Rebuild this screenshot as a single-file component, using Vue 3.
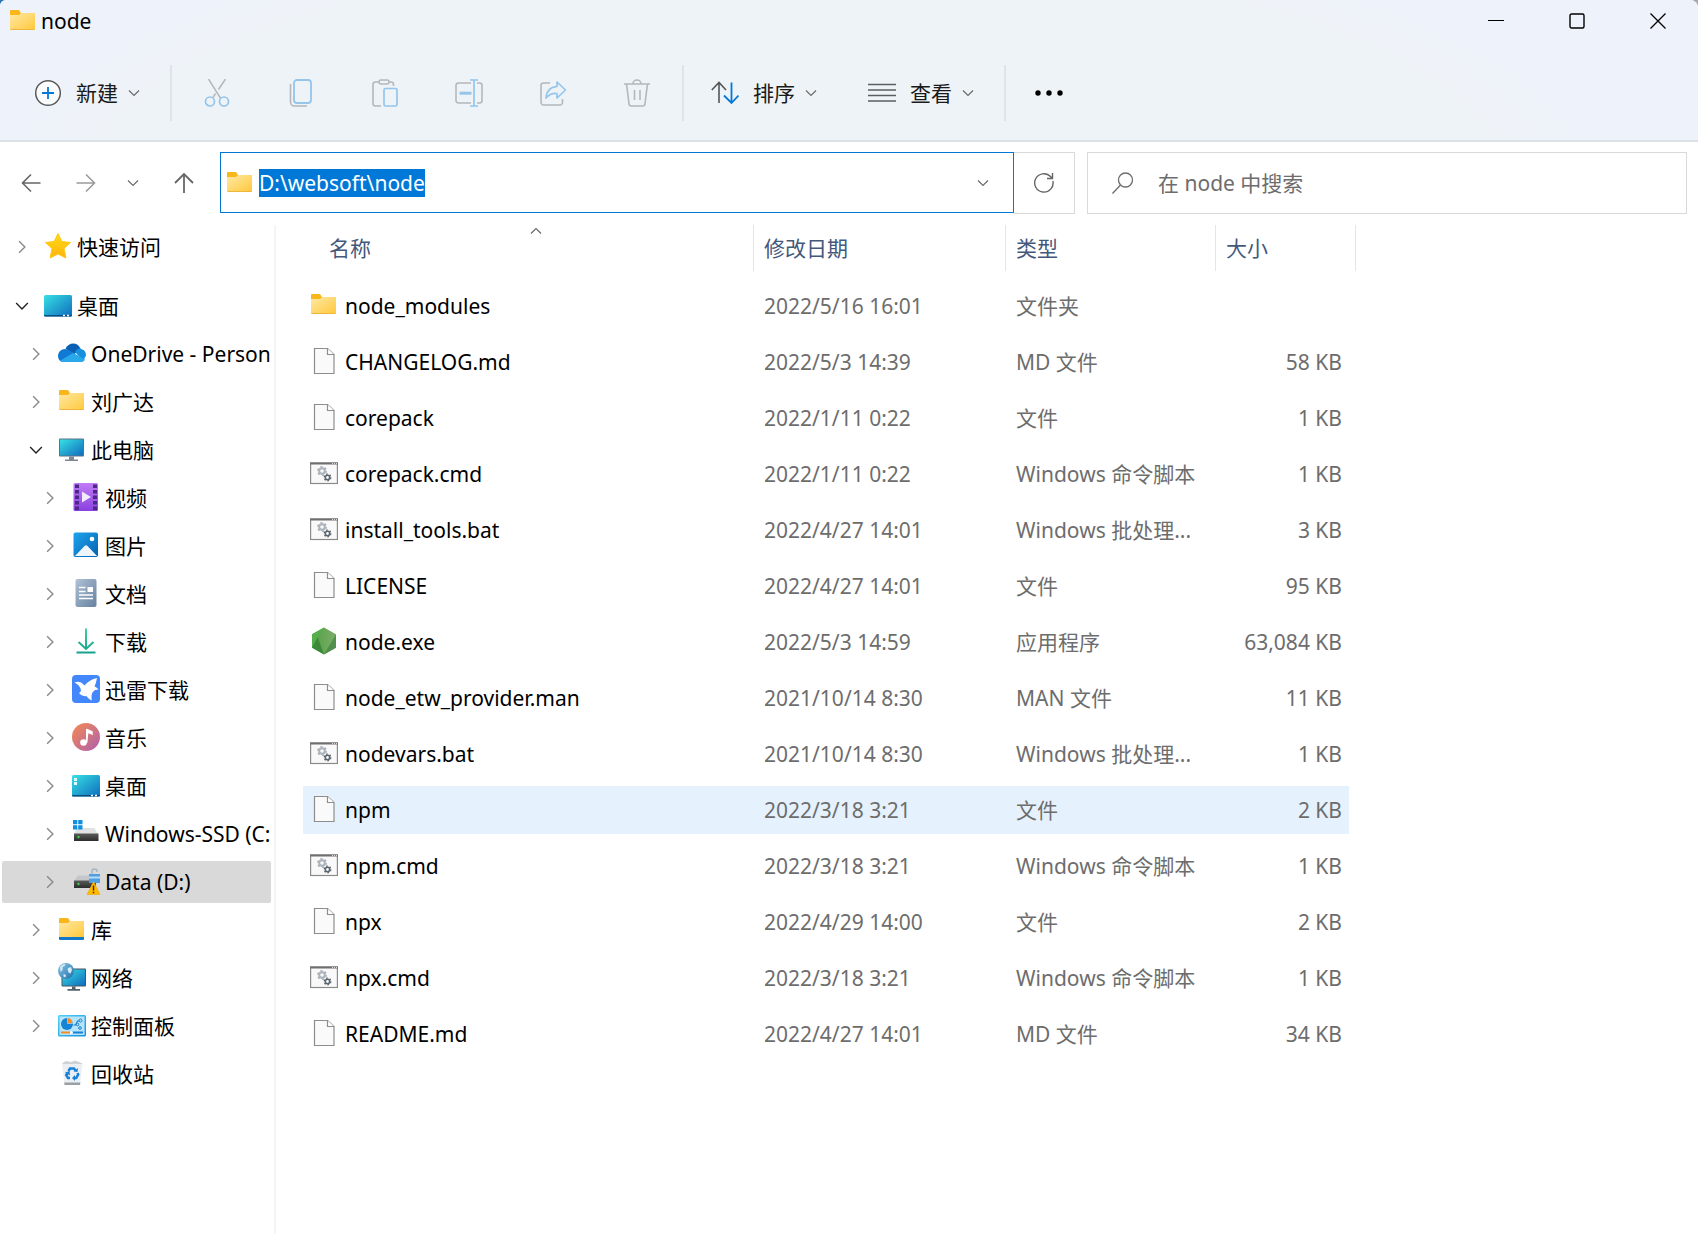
<script setup>
import { onMounted, ref } from 'vue'

const address = ref('D:\\websoft\\node')
const query = ref('')
const addressInput = ref(null)

const editActions = [
  { icon: 'cut', label: '剪切' },
  { icon: 'copy', label: '复制' },
  { icon: 'paste', label: '粘贴' },
  { icon: 'rename', label: '重命名' },
  { icon: 'share', label: '共享' },
  { icon: 'trash', label: '删除' },
]

const tree = [
  { name: '快速访问', icon: 'star', level: 0, group: true },
  { name: '桌面', icon: 'desktop', level: 0, open: true },
  { name: 'OneDrive - Personal', icon: 'cloud', level: 1 },
  { name: '刘广达', icon: 'folder', level: 1 },
  { name: '此电脑', icon: 'pc', level: 1, open: true },
  { name: '视频', icon: 'video', level: 2 },
  { name: '图片', icon: 'picture', level: 2 },
  { name: '文档', icon: 'document', level: 2 },
  { name: '下载', icon: 'download', level: 2 },
  { name: '迅雷下载', icon: 'thunder', level: 2 },
  { name: '音乐', icon: 'music', level: 2 },
  { name: '桌面', icon: 'desktop-tiles', level: 2 },
  { name: 'Windows-SSD (C:)', icon: 'drive-win', level: 2 },
  { name: 'Data (D:)', icon: 'drive-lock', level: 2, selected: true },
  { name: '库', icon: 'library', level: 1 },
  { name: '网络', icon: 'network', level: 1 },
  { name: '控制面板', icon: 'control', level: 1 },
  { name: '回收站', icon: 'recycle', level: 1, leaf: true },
]

const files = [
  { name: 'node_modules', icon: 'folder', date: '2022/5/16 16:01', type: '文件夹', size: '' },
  { name: 'CHANGELOG.md', icon: 'file', date: '2022/5/3 14:39', type: 'MD 文件', size: '58 KB' },
  { name: 'corepack', icon: 'file', date: '2022/1/11 0:22', type: '文件', size: '1 KB' },
  { name: 'corepack.cmd', icon: 'script', date: '2022/1/11 0:22', type: 'Windows 命令脚本', size: '1 KB' },
  { name: 'install_tools.bat', icon: 'script', date: '2022/4/27 14:01', type: 'Windows 批处理...', size: '3 KB' },
  { name: 'LICENSE', icon: 'file', date: '2022/4/27 14:01', type: '文件', size: '95 KB' },
  { name: 'node.exe', icon: 'node', date: '2022/5/3 14:59', type: '应用程序', size: '63,084 KB' },
  { name: 'node_etw_provider.man', icon: 'file', date: '2021/10/14 8:30', type: 'MAN 文件', size: '11 KB' },
  { name: 'nodevars.bat', icon: 'script', date: '2021/10/14 8:30', type: 'Windows 批处理...', size: '1 KB' },
  { name: 'npm', icon: 'file', date: '2022/3/18 3:21', type: '文件', size: '2 KB', hover: true },
  { name: 'npm.cmd', icon: 'script', date: '2022/3/18 3:21', type: 'Windows 命令脚本', size: '1 KB' },
  { name: 'npx', icon: 'file', date: '2022/4/29 14:00', type: '文件', size: '2 KB' },
  { name: 'npx.cmd', icon: 'script', date: '2022/3/18 3:21', type: 'Windows 命令脚本', size: '1 KB' },
  { name: 'README.md', icon: 'file', date: '2022/4/27 14:01', type: 'MD 文件', size: '34 KB' },
]

onMounted(() => {
  addressInput.value.focus()
  addressInput.value.select()
})
</script>

<template>
  <svg class="sprite" aria-hidden="true">
    <defs>
      <linearGradient id="g-folder" x1="0" y1="0" x2="1" y2="1"><stop offset="0" stop-color="#ffe9a6" /><stop offset="1" stop-color="#ffc83a" /></linearGradient>
      <linearGradient id="g-screen" x1="0" y1="0" x2="1" y2="1"><stop offset="0" stop-color="#37e0e4" /><stop offset="1" stop-color="#0f6cbd" /></linearGradient>
      <linearGradient id="g-star" x1="0" y1="0" x2="0" y2="1"><stop offset="0" stop-color="#ffdc14" /><stop offset="1" stop-color="#ffb30f" /></linearGradient>
      <linearGradient id="g-video" x1="0" y1="0" x2="0" y2="1"><stop offset="0" stop-color="#c07cf7" /><stop offset="1" stop-color="#8a40e0" /></linearGradient>
      <linearGradient id="g-pic" x1="0" y1="0" x2="1" y2="1"><stop offset="0" stop-color="#1fa5ee" /><stop offset="1" stop-color="#0560b0" /></linearGradient>
      <linearGradient id="g-doc" x1="0" y1="0" x2="1" y2="1"><stop offset="0" stop-color="#b0c2d6" /><stop offset="1" stop-color="#66809f" /></linearGradient>
      <linearGradient id="g-down" gradientUnits="userSpaceOnUse" x1="14" y1="2" x2="14" y2="27"><stop offset="0" stop-color="#3fcf96" /><stop offset="1" stop-color="#12a08c" /></linearGradient>
      <linearGradient id="g-music" x1="0" y1="0" x2="1" y2="1"><stop offset="0" stop-color="#f58b52" /><stop offset="1" stop-color="#ae5fae" /></linearGradient>
      <linearGradient id="g-drive" x1="0" y1="0" x2="0" y2="1"><stop offset="0" stop-color="#5a5a5a" /><stop offset="1" stop-color="#2c2c2c" /></linearGradient>
      <linearGradient id="g-node" x1="0" y1="0" x2="1" y2="0"><stop offset="0" stop-color="#4f9e45" /><stop offset="1" stop-color="#7fae6a" /></linearGradient>
      <linearGradient id="g-globe" x1="0" y1="0" x2="1" y2="1"><stop offset="0" stop-color="#8cc8ea" /><stop offset="1" stop-color="#1f6ea6" /></linearGradient>
      <linearGradient id="g-panel" x1="0" y1="0" x2="1" y2="1"><stop offset="0" stop-color="#4fd2f7" /><stop offset="1" stop-color="#1a90dc" /></linearGradient>
    </defs>

    <symbol id="i-folder" viewBox="0 0 28 28">
      <path d="M2 3h8l2 3h14v3H1V4a1 1 0 0 1 1-1z" fill="#f9b71c" />
      <path d="M1 8h9l2-2h13a1 1 0 0 1 1 1v15a1 1 0 0 1-1 1H2a1 1 0 0 1-1-1z" fill="url(#g-folder)" />
      <path d="M1.500 22.500h24" stroke="#efb63c" stroke-width="1" />
    </symbol>
    <symbol id="i-library" viewBox="0 0 28 28">
      <path d="M2 3h8l2 3h14v3H1V4a1 1 0 0 1 1-1z" fill="#f9b71c" />
      <path d="M1 8h9l2-2h13a1 1 0 0 1 1 1v15H1z" fill="url(#g-folder)" />
      <path d="M1 22h25v2a1 1 0 0 1-1 1H2a1 1 0 0 1-1-1z" fill="#0f78c8" />
    </symbol>
    <symbol id="i-star" viewBox="0 0 28 28">
      <path d="M14 1.500l3.800 8 8.700 1-6.500 6 1.900 9.500-7.900-4-7.900 4L8 16.500l-6.500-6 8.700-1z" fill="url(#g-star)" stroke="#ffc60f" stroke-linejoin="round" />
    </symbol>
    <symbol id="i-desktop" viewBox="0 0 28 28">
      <rect y="4" width="28" height="21.500" rx="1.500" fill="url(#g-screen)" />
      <path d="M0 24h28v.5a1 1 0 0 1-1 1H1a1 1 0 0 1-1-1z" fill="#0b4f80" />
      <path d="M19 24.500h2m2 0h2" stroke="#fff" stroke-width="1.500" />
    </symbol>
    <symbol id="i-desktop-tiles" viewBox="0 0 28 28">
      <use href="#i-desktop" width="28" height="28" />
      <path d="M2 7h3v3H2zm0 4h3v3H2z" fill="#e4fbff" />
    </symbol>
    <symbol id="i-cloud" viewBox="0 0 28 28">
      <path d="M7.500 10C10 3 20 2.500 22.500 10l-6 5z" fill="#0a5fb4" />
      <path d="M0 17c0-5 5-8.500 9.500-6.500L20 17 4 23c-2.500-.8-4-3.500-4-6z" fill="#1079d4" />
      <path d="M17 13c2-4.500 6-4 7-2.500 3 .5 4 3.500 4 6L25 22z" fill="#1490df" />
      <path d="M2.500 21.500L15 14l12 6.500c-1 2-2.500 2.500-4 2.500H7c-2 0-3.500-.5-4.500-1.500z" fill="#29a8ea" />
    </symbol>
    <symbol id="i-pc" viewBox="0 0 28 28">
      <rect x="1" y="3.500" width="25" height="18" rx="1" fill="#5b7286" />
      <rect x="2" y="4.500" width="23" height="16" fill="url(#g-screen)" />
      <path d="M11 21.500h5v3h4V26H7v-1.500h4z" fill="#7b8792" />
    </symbol>
    <symbol id="i-video" viewBox="0 0 28 28">
      <rect x="1.500" width="24.500" height="28" rx="1.500" fill="url(#g-video)" />
      <path d="M3 1.500h4V5H3zm0 5.500h4v3.500H3zm0 5.500h4V16H3zM3 18h4v3.500H3zm0 5.500h4V27H3zm18-22h4V5h-4zM21 7h4v3.500h-4zm0 5.500h4V16h-4zm0 5.500h4v3.500h-4zm0 5.500h4V27h-4z" fill="#4d2787" />
      <path d="M10 8.500l9 5.500-9 5.500z" fill="#f3eafd" />
    </symbol>
    <symbol id="i-picture" viewBox="0 0 28 28">
      <rect x="1.500" y="1.500" width="24.500" height="24.500" rx="2" fill="url(#g-pic)" />
      <path d="M3 25l9.500-10a2 2 0 0 1 3 0L25 25z" fill="#eef6fc" />
      <circle cx="20" cy="8" r="2.300" fill="#fff" />
    </symbol>
    <symbol id="i-document" viewBox="0 0 28 28">
      <rect x="3.500" y="0" width="21" height="28" rx="2" fill="url(#g-doc)" />
      <path d="M7 8.500h6.500m-6.500 4h6.500M7 16h14M7 19.500h14" stroke="#fff" stroke-width="1.500" />
      <path d="M15.500 8h5.500v5h-5.500z" fill="#fff" />
    </symbol>
    <symbol id="i-download" viewBox="0 0 28 28">
      <path d="M14 1.500v20.500M6.500 15l7.500 7 7.500-7M4.500 25.500h19" fill="none" stroke="url(#g-down)" stroke-width="2" />
    </symbol>
    <symbol id="i-thunder" viewBox="0 0 28 28">
      <rect width="28" height="28" rx="4" fill="#4287fb" />
      <path d="M2.500 7.500c3-1.200 6-.8 8.500 1.500l1.500 1.500C15.500 7 19 4.500 25 3c-.8 3.500-1.300 6-2.500 8.500 1.500.5 3 1.500 4 3-2.500 0-4.500.8-5.700 2.500-1.300 1.800-1.500 4.500-1 8.500-2-.8-3.800-2.200-5-4.200-3 .3-5.800-1-7.800-3.300 2-.8 2.300-2.500 1.500-4.500C7.500 10.800 5.500 9 2.500 7.500z" fill="#fff" />
    </symbol>
    <symbol id="i-music" viewBox="0 0 28 28">
      <circle cx="14" cy="14" r="14" fill="url(#g-music)" />
      <circle cx="11.500" cy="19.500" r="3.300" fill="#fff" />
      <path d="M14.800 19.500V6l5.700 2.500v3.200l-4-1.700" fill="#fff" stroke="#fff" stroke-width=".5" />
      <path d="M14 6h1.500v13.500H14z" fill="#fff" />
    </symbol>
    <symbol id="i-drive-win" viewBox="0 0 28 28">
      <path d="M5 9h17.500L26 15H2z" fill="#dfe1e3" />
      <rect x="2" y="14.500" width="24.500" height="7.500" fill="url(#g-drive)" />
      <circle cx="6.500" cy="18" r="1.200" fill="#3bd24a" />
      <path d="M1 1h4.300v4.300H1zm5.200 0h4.300v4.300H6.200zM1 6.200h4.300v4.300H1zm5.200 0h4.300v4.300H6.200z" fill="#0e8fe0" />
    </symbol>
    <symbol id="i-drive-lock" viewBox="0 0 28 28">
      <path d="M6 8.500h15L25 14H2z" fill="#c4c7ca" />
      <rect x="2" y="13.500" width="22" height="7.500" fill="url(#g-drive)" />
      <circle cx="6.500" cy="17" r="1.200" fill="#3bd24a" />
      <path d="M20 7V4.500a2.500 2.500 0 0 1 5 0V5" fill="none" stroke="#a9b7c2" stroke-width="1.500" />
      <path d="M17 7h11v9H17z" fill="#4ea0e2" /><path d="M17 9.500h11v2H17z" fill="#b5dcf8" />
      <path d="M21.500 14.500L28 27.500H15z" fill="#ffb900" stroke="#f0a800" stroke-width=".6" stroke-linejoin="round" />
      <path d="M21.500 18.500v5m0 1.200v1.500" stroke="#3a2c00" stroke-width="1.400" />
    </symbol>
    <symbol id="i-network" viewBox="0 0 28 28">
      <rect x="3.500" y="5.500" width="24.500" height="18" rx="1" fill="#41566a" />
      <rect x="4.500" y="6.500" width="22.500" height="16" fill="url(#g-screen)" />
      <path d="M14 23.500h3.500v2.500h4.500v1.800H9.500V26H14z" fill="#56606a" />
      <circle cx="8" cy="8" r="8" fill="url(#g-globe)" />
      <path d="M2 4c1.500-2 3.500-3 5.500-3l-1 2-2 1v3L2.500 9zM10 5l3-1 1 3-1.500 3.500-2-1-1-3zM5.500 11l2.500 1-.5 2.500-2-1z" fill="#d3eaf7" />
    </symbol>
    <symbol id="i-control" viewBox="0 0 28 28">
      <rect y="4" width="28" height="21.500" rx="1.500" fill="url(#g-panel)" />
      <rect x="1.500" y="5.500" width="25" height="18.500" fill="#b5e4fb" />
      <circle cx="9" cy="13" r="6" fill="#1583d6" />
      <path d="M9.500 12.500v-6a6 6 0 0 1 5 6z" fill="#f68b1e" stroke="#b5e4fb" stroke-width=".6" />
      <path d="M15.500 14h2l2-4h2" fill="none" stroke="#1a7fc8" stroke-width="1.100" />
      <circle cx="22.500" cy="9.500" r="1.500" fill="none" stroke="#1a7fc8" /><circle cx="19.500" cy="13.500" r="1.300" fill="none" stroke="#1a7fc8" /><circle cx="22" cy="17" r="1.300" fill="none" stroke="#1a7fc8" />
      <path d="M3 21.500h9" stroke="#f68b1e" stroke-width="2" /><path d="M14 21.500h11" stroke="#1583d6" stroke-width="2" />
      <circle cx="13.500" cy="21.500" r="1.500" fill="#fff" />
    </symbol>
    <symbol id="i-recycle" viewBox="0 0 28 28">
      <path d="M4 4.500l4-2.500 5 1 4-1.500 4 1.500 3.500 1.500-1 2H5z" fill="#cfd2d5" />
      <path d="M4 5h20.500L22 26H6.500z" fill="#eceff1" />
      <path d="M6.300 23.500h16L22 26H6.500z" fill="#9aa0a6" />
      <path d="M10.500 12l1.500-2.500h4l1.500 2M19.500 14l.7 1.500-2 3.500h-2m-4.200 0H10l-1.800-3 1.300-2" fill="none" stroke="#1482dc" stroke-width="2.500" />
      <path d="M15.500 12.500l4 .5.500-4zM17 16v6l-3-3zM7 13.500l4.500-1.500.5 4.500z" fill="#1482dc" />
    </symbol>
    <symbol id="i-file" viewBox="0 0 28 28">
      <path d="M4.500 1.500h13l6.500 6v19H4.500z" fill="#fafafa" stroke="#8d8d8d" stroke-width="1.200" />
      <path d="M17.500 1.500v6H24" fill="#fff" stroke="#8d8d8d" stroke-width="1.200" />
    </symbol>
    <symbol id="i-script" viewBox="0 0 28 28">
      <rect x=".6" y="4" width="26.800" height="20.500" fill="#f9f9f9" stroke="#8a8a8a" stroke-width="1.200" />
      <path d="M0 4.500h28" stroke="#6f6f6f" stroke-width="2" />
      <path d="M22 4.500h1m1 0h1m1 0h1" stroke="#ddd" stroke-width="1" />
      <circle cx="12" cy="12" r="2.800" fill="none" stroke="#a9b3bb" stroke-width="2" />
      <circle cx="12" cy="12" r="4.200" fill="none" stroke="#a9b3bb" stroke-width="1.600" stroke-dasharray="2.200 2.200" />
      <circle cx="17.500" cy="18.500" r="2.200" fill="none" stroke="#5b666f" stroke-width="1.600" />
      <circle cx="17.500" cy="18.500" r="3.300" fill="none" stroke="#5b666f" stroke-width="1.300" stroke-dasharray="1.700 1.750" />
    </symbol>
    <symbol id="i-node" viewBox="0 0 28 28">
      <path d="M14 .5l12 6.800v13.400L14 27.500 2 20.700V7.300z" fill="url(#g-node)" />
      <path d="M2 20.500L7.500 10 14 27.500z" fill="#3a8a3a" />
      <path d="M14 .5L7.500 10 2 20.500V7.300z" fill="#56b04a" />
      <path d="M26 7.300v13.400L14 27.500z" fill="#3e8542" opacity=".7" />
    </symbol>

    <symbol id="i-cut" viewBox="0 0 28 28">
      <path d="M5.500 0l12.200 19.500M22.500 0l-7 10.500M12.500 14.500L10 18.500" fill="none" stroke="#b4b8bc" stroke-width="1.500" />
      <circle cx="7" cy="22.500" r="4.500" fill="none" stroke="#95c5ea" stroke-width="1.700" />
      <circle cx="21" cy="22.500" r="4.500" fill="none" stroke="#95c5ea" stroke-width="1.700" />
    </symbol>
    <symbol id="i-copy" viewBox="0 0 28 28">
      <path d="M3.500 5v18a4 4 0 0 0 4 4H20" fill="none" stroke="#b4b8bc" stroke-width="1.600" />
      <rect x="7" y="1" width="17" height="23" rx="3" fill="none" stroke="#95c5ea" stroke-width="1.800" />
    </symbol>
    <symbol id="i-paste" viewBox="0 0 28 28">
      <path d="M8 3H4.500A2.500 2.500 0 0 0 2 5.500v19A2.500 2.500 0 0 0 4.500 27H10M18 3h2a2.500 2.500 0 0 1 2.500 2.500V7" fill="none" stroke="#b4b8bc" stroke-width="1.600" />
      <rect x="8" y="1" width="10" height="4" rx="2" fill="none" stroke="#b4b8bc" stroke-width="1.500" />
      <rect x="13" y="9.500" width="13" height="17.500" rx="1.500" fill="none" stroke="#95c5ea" stroke-width="1.700" />
    </symbol>
    <symbol id="i-rename" viewBox="0 0 28 28">
      <path d="M16 4H3.500A2.500 2.500 0 0 0 1 6.500v15A2.500 2.500 0 0 0 3.500 24H16M22 4h2.500A2.500 2.500 0 0 1 27 6.500v15a2.500 2.500 0 0 1-2.500 2.500H22" fill="none" stroke="#b4b8bc" stroke-width="1.600" />
      <path d="M15 1h8m-4 0v26m-4 0h8" fill="none" stroke="#95c5ea" stroke-width="1.700" />
      <path d="M4.500 14.200h12" stroke="#95c5ea" stroke-width="3" />
    </symbol>
    <symbol id="i-share" viewBox="0 0 28 28">
      <path d="M11 4H4.500A2.500 2.500 0 0 0 2 6.500v17A2.500 2.500 0 0 0 4.500 26H21a2.500 2.500 0 0 0 2.500-2.500V20" fill="none" stroke="#b4b8bc" stroke-width="1.600" />
      <path d="M18 3l8.500 8-8.500 8v-4.500c-5-.5-8 1-11 4.500.5-6.500 4-11 11-11.500z" fill="none" stroke="#95c5ea" stroke-width="1.700" stroke-linejoin="round" />
    </symbol>
    <symbol id="i-trash" viewBox="0 0 28 28">
      <path d="M1 5h26M10 4.500a4 3.500 0 0 1 8 0M3.500 5L6 24.500A2.500 2.500 0 0 0 8.500 27h11a2.500 2.500 0 0 0 2.500-2.500L24.500 5M11.500 11v10M17 11v10" fill="none" stroke="#b4b8bc" stroke-width="1.600" />
    </symbol>
    <symbol id="i-new" viewBox="0 0 28 28">
      <circle cx="14" cy="14" r="12.300" fill="#fafbfc" stroke="#5a5a5a" stroke-width="1.500" />
      <path d="M14 8v12M8 14h12" stroke="#0078d7" stroke-width="1.800" />
    </symbol>
    <symbol id="i-sort" viewBox="0 0 28 28">
      <path d="M8 24V3.500M.8 11L8 3.500l7 7.500" fill="none" stroke="#555" stroke-width="1.600" />
      <path d="M20.500 3.500V24M13 16.500l7.500 7.500 7-7.500" fill="none" stroke="#0078d7" stroke-width="1.800" />
    </symbol>
    <symbol id="i-view" viewBox="0 0 28 28">
      <path d="M0 5.500h28M0 11h28M0 16.500h28M0 22h28" stroke="#5c5f62" stroke-width="1.600" />
    </symbol>
    <symbol id="i-more" viewBox="0 0 28 28">
      <circle cx="3" cy="14" r="2.700" /><circle cx="14" cy="14" r="2.700" /><circle cx="25" cy="14" r="2.700" />
    </symbol>
    <symbol id="i-chevron" viewBox="0 0 12 12">
      <path d="M1 3.500l5 5 5-5" fill="none" stroke="currentColor" stroke-width="1.200" />
    </symbol>
    <symbol id="i-left" viewBox="0 0 20 20"><path d="M19.500 10H2M10 1.500L1.500 10l8.500 8.500" fill="none" stroke="currentColor" stroke-width="1.600" /></symbol>
    <symbol id="i-right" viewBox="0 0 20 20"><path d="M.5 10H18M10 1.500l8.500 8.500-8.500 8.500" fill="none" stroke="currentColor" stroke-width="1.600" /></symbol>
    <symbol id="i-up" viewBox="0 0 20 20"><path d="M10 20V1M1 10l9-9 9 9" fill="none" stroke="currentColor" stroke-width="1.800" /></symbol>
    <symbol id="i-refresh" viewBox="0 0 20 20"><path d="M18.900 8A9.200 9.200 0 1 1 16.500 3.500L18.500 5.500M18.500 0v5.500H13" fill="none" stroke="currentColor" stroke-width="1.400" /></symbol>
    <symbol id="i-search" viewBox="0 0 22 22"><circle cx="13.500" cy="8" r="7" fill="none" stroke="currentColor" stroke-width="1.300" /><path d="M8.500 13L.5 21.500" stroke="currentColor" stroke-width="1.300" /></symbol>
    <symbol id="i-min" viewBox="0 0 16 16"><path d="M0 7.500h16" stroke="#000" /></symbol>
    <symbol id="i-max" viewBox="0 0 16 16"><rect x="1" y="1" width="14" height="14" rx="1.500" fill="none" stroke="#000" stroke-width="1.400" /></symbol>
    <symbol id="i-close" viewBox="0 0 16 16"><path d="M.5.500l15 15m0-15l-15 15" stroke="#000" stroke-width="1.300" /></symbol>
  </svg>

  <div class="window">
    <header class="chrome">
      <div class="titlebar">
        <svg class="icon"><use href="#i-folder" /></svg>
        <h1 class="title">node</h1>
        <button class="caption" aria-label="最小化"><svg><use href="#i-min" /></svg></button>
        <button class="caption" aria-label="最大化"><svg><use href="#i-max" /></svg></button>
        <button class="caption" aria-label="关闭"><svg><use href="#i-close" /></svg></button>
      </div>

      <div class="toolbar" role="toolbar">
        <button class="command">
          <svg class="icon"><use href="#i-new" /></svg>新建<svg class="caret"><use href="#i-chevron" /></svg>
        </button>
        <span class="divider"></span>
        <button v-for="action in editActions" :key="action.icon" class="action" :aria-label="action.label" disabled>
          <svg class="icon"><use :href="'#i-' + action.icon" /></svg>
        </button>
        <span class="divider"></span>
        <button class="command">
          <svg class="icon"><use href="#i-sort" /></svg>排序<svg class="caret"><use href="#i-chevron" /></svg>
        </button>
        <button class="command">
          <svg class="icon"><use href="#i-view" /></svg>查看<svg class="caret"><use href="#i-chevron" /></svg>
        </button>
        <span class="divider"></span>
        <button class="action more" aria-label="更多"><svg class="icon"><use href="#i-more" /></svg></button>
      </div>
    </header>

    <div class="navbar">
      <nav class="history">
        <button class="arrow" aria-label="后退"><svg class="glyph"><use href="#i-left" /></svg></button>
        <button class="arrow faint" aria-label="前进"><svg class="glyph"><use href="#i-right" /></svg></button>
        <button class="recent" aria-label="最近浏览的位置"><svg class="caret"><use href="#i-chevron" /></svg></button>
        <button class="arrow up" aria-label="向上"><svg class="glyph"><use href="#i-up" /></svg></button>
      </nav>
      <div class="address">
        <svg class="icon"><use href="#i-folder" /></svg>
        <input ref="addressInput" v-model="address" class="field" type="text" aria-label="地址" spellcheck="false" />
        <button class="drop" aria-label="以前的位置"><svg class="caret"><use href="#i-chevron" /></svg></button>
      </div>
      <button class="refresh" aria-label="刷新"><svg class="glyph"><use href="#i-refresh" /></svg></button>
      <label class="search">
        <svg class="lens"><use href="#i-search" /></svg>
        <input v-model="query" class="field" type="text" placeholder="在 node 中搜索" aria-label="搜索" />
      </label>
    </div>

    <div class="body">
      <aside class="sidebar">
        <ul class="tree">
          <li
            v-for="(node, i) in tree"
            :key="i"
            class="node"
            :class="['level-' + node.level, { group: node.group, selected: node.selected }]"
          >
            <button class="toggle" :class="{ open: node.open }" :disabled="node.leaf" :aria-label="'展开 ' + node.name">
              <svg v-if="!node.leaf" class="twist"><use href="#i-chevron" /></svg>
            </button>
            <svg class="icon"><use :href="'#i-' + node.icon" /></svg>
            <span class="label">{{ node.name }}</span>
          </li>
        </ul>
      </aside>

      <main class="content">
        <table class="files">
          <colgroup>
            <col class="col-name" /><col class="col-date" /><col class="col-type" /><col class="col-size" />
          </colgroup>
          <thead>
            <tr>
              <th scope="col" class="first">
                <button class="sort">名称<svg class="caret sorted"><use href="#i-chevron" /></svg></button>
              </th>
              <th scope="col"><button class="sort">修改日期</button></th>
              <th scope="col"><button class="sort">类型</button></th>
              <th scope="col"><button class="sort">大小</button></th>
            </tr>
          </thead>
          <tbody>
            <tr v-for="file in files" :key="file.name" :class="{ hover: file.hover }">
              <td class="name">
                <div class="entry"><svg class="icon"><use :href="'#i-' + file.icon" /></svg>{{ file.name }}</div>
              </td>
              <td>{{ file.date }}</td>
              <td>{{ file.type }}</td>
              <td class="size">{{ file.size }}</td>
            </tr>
          </tbody>
        </table>
      </main>
    </div>
  </div>
</template>

<style>
body {
  margin: 0;
  background: linear-gradient(to right, #2f76b5 50%, #a9a9a9 50%);
}
</style>

<style scoped>
.sprite {
  position: absolute;
  width: 0;
  height: 0;
}

.window {
  display: flex;
  flex-direction: column;
  min-height: 100vh;
  overflow: hidden;
  border-radius: 6px 8px 0 0;
  background: #fff;
  color: #000;
  font: 21px/28px "Noto Sans", "Noto Sans CJK SC", sans-serif;
}

button,
input {
  padding: 0;
  border: 0;
  background: none;
  color: inherit;
  font: inherit;
}

svg {
  flex: none;
  display: block;
}

.icon {
  width: 28px;
  height: 28px;
}

.caret {
  width: 12px;
  height: 12px;
  color: #6b6b6b;
}

.glyph {
  width: 20px;
  height: 20px;
}

/* Title bar and command bar */
.chrome {
  border-bottom: 2px solid #dce1e6;
  background: radial-gradient(ellipse 45% 180% at 47% 130%, #eef3f7 88%, #eef2fb 112%);
}

.titlebar {
  display: flex;
  align-items: center;
  height: 42px;
  padding-left: 9px;
}

.title {
  flex: 1;
  margin: 0;
  padding-left: 4px;
  font-size: 21px;
  font-weight: 400;
}

.caption {
  display: flex;
  align-items: center;
  justify-content: center;
  width: 81px;
  height: 42px;
}

.caption svg {
  width: 16px;
  height: 16px;
}

.toolbar {
  display: flex;
  align-items: center;
  height: 94px;
  padding: 4px 0 0 10px;
}

.command {
  display: flex;
  align-items: center;
  height: 56px;
  padding: 0 27px 0 24px;
  color: #1a1a1a;
}

.command .icon {
  margin-right: 14px;
}

.command .caret {
  margin-left: 10px;
}

.action {
  display: flex;
  align-items: center;
  justify-content: center;
  width: 84px;
  height: 56px;
}

.action.more {
  width: 80px;
}

.divider {
  width: 2px;
  height: 56px;
  margin: 0 3px;
  background: #dfe4e8;
}

/* Navigation row */
.navbar {
  display: flex;
  height: 62px;
  padding: 10px 11px 11px 5px;
}

.history {
  display: flex;
  flex: none;
  gap: 3px;
  width: 215px;
  color: #666;
}

.arrow,
.recent,
.drop,
.refresh {
  display: flex;
  flex: none;
  align-items: center;
  justify-content: center;
}

.arrow {
  width: 52px;
}

.arrow.faint {
  color: #9b9b9b;
}

.arrow.up {
  width: 60px;
}

.recent {
  width: 36px;
}

.address {
  display: flex;
  flex: 792;
  align-items: center;
  min-width: 0;
  margin-bottom: 1px;
  border: 1px solid #0078d7;
}

.address .icon {
  margin: 0 5px;
}

.field {
  flex: 1;
  min-width: 0;
  height: 28px;
  outline: 0;
  caret-color: transparent;
}

.field::selection {
  background: #0078d7;
  color: #fff;
}

.drop {
  width: 60px;
  height: 59px;
}

.refresh {
  width: 61px;
  margin-right: 12px;
  border: 1px solid #d9d9d9;
  border-left: 0;
  color: #666;
}

.search {
  display: flex;
  flex: 598;
  align-items: center;
  min-width: 0;
  border: 1px solid #d9d9d9;
  color: #6d6d6d;
}

.field::placeholder {
  color: #6d6d6d;
  opacity: 1;
}

.lens {
  width: 22px;
  height: 22px;
  margin: 0 24px;
}

/* Folder tree */
.body {
  display: flex;
  flex: 1;
}

.sidebar {
  flex: none;
  width: 269px;
  padding: 1px 3px 0 2px;
  border-right: 2px solid #f5f5f5;
}

.tree {
  margin: 0;
  padding: 0;
  list-style: none;
}

.node {
  display: flex;
  align-items: center;
  height: 42px;
  margin-bottom: 6px;
  padding-left: 10px;
  border-radius: 2px;
  overflow: hidden;
  white-space: nowrap;
}

.node.group {
  margin-bottom: 17px;
}

.node.level-1 {
  padding-left: 24px;
}

.node.level-2 {
  padding-left: 38px;
}

.node.selected {
  background: #d9d9d9;
}

.toggle {
  display: flex;
  flex: none;
  align-items: center;
  justify-content: center;
  width: 20px;
  height: 28px;
  margin-right: 12px;
  color: #8a8a8a;
}

.twist {
  width: 14px;
  height: 14px;
  transform: rotate(-90deg);
}

.toggle.open {
  color: #222;
}

.toggle.open .twist {
  transform: none;
}

.node .icon,
.entry .icon {
  margin-bottom: 2px;
}

.label {
  padding-left: 5px;
}

/* File list */
.content {
  flex: 1;
  min-width: 0;
  padding-left: 27px;
}

.files {
  width: 1053px;
  border-spacing: 0;
  table-layout: fixed;
}

.col-name {
  width: 451px;
}

.col-date {
  width: 252px;
}

.col-type {
  width: 210px;
}

.col-size {
  width: 140px;
}

th {
  height: 57px;
  padding: 0;
  vertical-align: top;
  font-weight: 400;
}

th.first {
  padding-left: 16px;
}

.sort {
  position: relative;
  display: block;
  width: 100%;
  height: 46px;
  padding-left: 10px;
  border-right: 1px solid #e5e5e5;
  color: #44587c;
  text-align: left;
}

.sorted {
  position: absolute;
  top: 0;
  left: 50%;
  transform: translateX(-50%) rotate(180deg);
}

td {
  height: 48px;
  padding: 0 0 0 10px;
  border-bottom: 8px solid transparent;
  background-clip: padding-box;
  color: #6d6d6d;
  white-space: nowrap;
}

td.name {
  padding-left: 7px;
  color: #000;
}

td.size {
  padding-right: 7px;
  border-right: 7px solid transparent;
  text-align: right;
}

.entry {
  display: flex;
  align-items: center;
  gap: 7px;
}

.hover td {
  background-color: #e5f2fe;
}
</style>
